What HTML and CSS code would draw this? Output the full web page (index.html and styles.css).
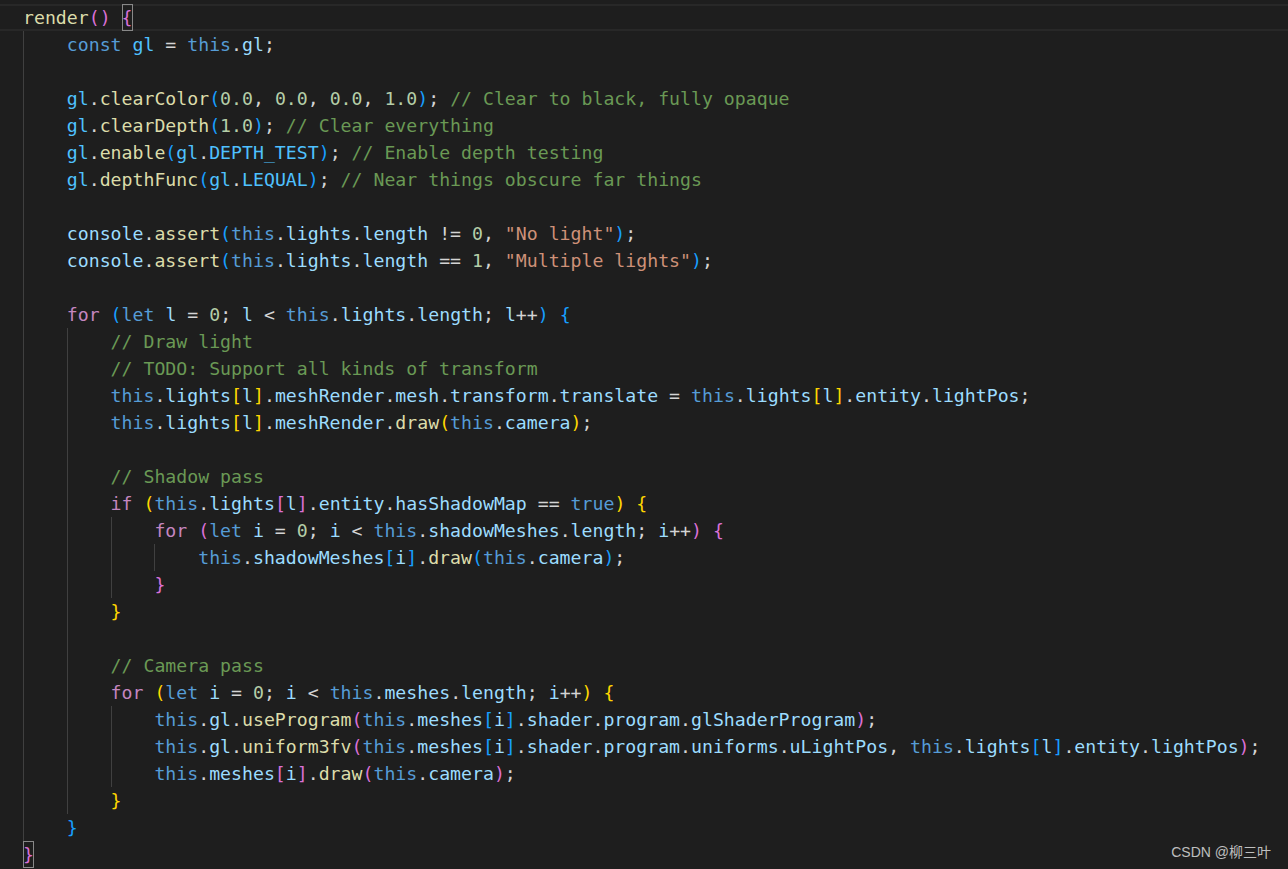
FILE: index.html
```html
<!doctype html>
<html lang="en">
	<head>
		<meta charset="UTF-8" />
		<meta name="viewport" content="width=device-width, initial-scale=1.0" />
		<title>render()</title>
		<link rel="stylesheet" href="styles.css">
	</head>
	<body>
		<main class="editor">
			<div class="ln cur"><span class="f">render</span><span class="b2">()</span> <span class="b2 match">{</span></div>
			<div class="ln"><span class="ind">    </span><span class="k">const</span> <span class="cn">gl</span> = <span class="k">this</span>.<span class="v">gl</span>;</div>
			<div class="ln"><span class="ind">    </span></div>
			<div class="ln"><span class="ind">    </span><span class="cn">gl</span>.<span class="f">clearColor</span><span class="b3">(</span><span class="n">0.0</span>, <span class="n">0.0</span>, <span class="n">0.0</span>, <span class="n">1.0</span><span class="b3">)</span>; <span class="cm">// Clear to black, fully opaque</span></div>
			<div class="ln"><span class="ind">    </span><span class="cn">gl</span>.<span class="f">clearDepth</span><span class="b3">(</span><span class="n">1.0</span><span class="b3">)</span>; <span class="cm">// Clear everything</span></div>
			<div class="ln"><span class="ind">    </span><span class="cn">gl</span>.<span class="f">enable</span><span class="b3">(</span><span class="cn">gl</span>.<span class="cn">DEPTH_TEST</span><span class="b3">)</span>; <span class="cm">// Enable depth testing</span></div>
			<div class="ln"><span class="ind">    </span><span class="cn">gl</span>.<span class="f">depthFunc</span><span class="b3">(</span><span class="cn">gl</span>.<span class="cn">LEQUAL</span><span class="b3">)</span>; <span class="cm">// Near things obscure far things</span></div>
			<div class="ln"><span class="ind">    </span></div>
			<div class="ln"><span class="ind">    </span><span class="v">console</span>.<span class="f">assert</span><span class="b3">(</span><span class="k">this</span>.<span class="v">lights</span>.<span class="v">length</span> != <span class="n">0</span>, <span class="s">"No light"</span><span class="b3">)</span>;</div>
			<div class="ln"><span class="ind">    </span><span class="v">console</span>.<span class="f">assert</span><span class="b3">(</span><span class="k">this</span>.<span class="v">lights</span>.<span class="v">length</span> == <span class="n">1</span>, <span class="s">"Multiple lights"</span><span class="b3">)</span>;</div>
			<div class="ln"><span class="ind">    </span></div>
			<div class="ln"><span class="ind">    </span><span class="c">for</span> <span class="b3">(</span><span class="k">let</span> <span class="v">l</span> = <span class="n">0</span>; <span class="v">l</span> &lt; <span class="k">this</span>.<span class="v">lights</span>.<span class="v">length</span>; <span class="v">l</span>++<span class="b3">)</span> <span class="b3">{</span></div>
			<div class="ln"><span class="ind">    </span><span class="ind">    </span><span class="cm">// Draw light</span></div>
			<div class="ln"><span class="ind">    </span><span class="ind">    </span><span class="cm">// TODO: Support all kinds of transform</span></div>
			<div class="ln"><span class="ind">    </span><span class="ind">    </span><span class="k">this</span>.<span class="v">lights</span><span class="b1">[</span><span class="v">l</span><span class="b1">]</span>.<span class="v">meshRender</span>.<span class="v">mesh</span>.<span class="v">transform</span>.<span class="v">translate</span> = <span class="k">this</span>.<span class="v">lights</span><span class="b1">[</span><span class="v">l</span><span class="b1">]</span>.<span class="v">entity</span>.<span class="v">lightPos</span>;</div>
			<div class="ln"><span class="ind">    </span><span class="ind">    </span><span class="k">this</span>.<span class="v">lights</span><span class="b1">[</span><span class="v">l</span><span class="b1">]</span>.<span class="v">meshRender</span>.<span class="f">draw</span><span class="b1">(</span><span class="k">this</span>.<span class="v">camera</span><span class="b1">)</span>;</div>
			<div class="ln"><span class="ind">    </span><span class="ind">    </span></div>
			<div class="ln"><span class="ind">    </span><span class="ind">    </span><span class="cm">// Shadow pass</span></div>
			<div class="ln"><span class="ind">    </span><span class="ind">    </span><span class="c">if</span> <span class="b1">(</span><span class="k">this</span>.<span class="v">lights</span><span class="b2">[</span><span class="v">l</span><span class="b2">]</span>.<span class="v">entity</span>.<span class="v">hasShadowMap</span> == <span class="k">true</span><span class="b1">)</span> <span class="b1">{</span></div>
			<div class="ln"><span class="ind">    </span><span class="ind">    </span><span class="ind">    </span><span class="c">for</span> <span class="b2">(</span><span class="k">let</span> <span class="v">i</span> = <span class="n">0</span>; <span class="v">i</span> &lt; <span class="k">this</span>.<span class="v">shadowMeshes</span>.<span class="v">length</span>; <span class="v">i</span>++<span class="b2">)</span> <span class="b2">{</span></div>
			<div class="ln"><span class="ind">    </span><span class="ind">    </span><span class="ind">    </span><span class="ind">    </span><span class="k">this</span>.<span class="v">shadowMeshes</span><span class="b3">[</span><span class="v">i</span><span class="b3">]</span>.<span class="f">draw</span><span class="b3">(</span><span class="k">this</span>.<span class="v">camera</span><span class="b3">)</span>;</div>
			<div class="ln"><span class="ind">    </span><span class="ind">    </span><span class="ind">    </span><span class="b2">}</span></div>
			<div class="ln"><span class="ind">    </span><span class="ind">    </span><span class="b1">}</span></div>
			<div class="ln"><span class="ind">    </span><span class="ind">    </span></div>
			<div class="ln"><span class="ind">    </span><span class="ind">    </span><span class="cm">// Camera pass</span></div>
			<div class="ln"><span class="ind">    </span><span class="ind">    </span><span class="c">for</span> <span class="b1">(</span><span class="k">let</span> <span class="v">i</span> = <span class="n">0</span>; <span class="v">i</span> &lt; <span class="k">this</span>.<span class="v">meshes</span>.<span class="v">length</span>; <span class="v">i</span>++<span class="b1">)</span> <span class="b1">{</span></div>
			<div class="ln"><span class="ind">    </span><span class="ind">    </span><span class="ind">    </span><span class="k">this</span>.<span class="v">gl</span>.<span class="f">useProgram</span><span class="b2">(</span><span class="k">this</span>.<span class="v">meshes</span><span class="b3">[</span><span class="v">i</span><span class="b3">]</span>.<span class="v">shader</span>.<span class="v">program</span>.<span class="v">glShaderProgram</span><span class="b2">)</span>;</div>
			<div class="ln"><span class="ind">    </span><span class="ind">    </span><span class="ind">    </span><span class="k">this</span>.<span class="v">gl</span>.<span class="f">uniform3fv</span><span class="b2">(</span><span class="k">this</span>.<span class="v">meshes</span><span class="b3">[</span><span class="v">i</span><span class="b3">]</span>.<span class="v">shader</span>.<span class="v">program</span>.<span class="v">uniforms</span>.<span class="v">uLightPos</span>, <span class="k">this</span>.<span class="v">lights</span><span class="b3">[</span><span class="v">l</span><span class="b3">]</span>.<span class="v">entity</span>.<span class="v">lightPos</span><span class="b2">)</span>;</div>
			<div class="ln"><span class="ind">    </span><span class="ind">    </span><span class="ind">    </span><span class="k">this</span>.<span class="v">meshes</span><span class="b2">[</span><span class="v">i</span><span class="b2">]</span>.<span class="f">draw</span><span class="b2">(</span><span class="k">this</span>.<span class="v">camera</span><span class="b2">)</span>;</div>
			<div class="ln"><span class="ind">    </span><span class="ind">    </span><span class="b1">}</span></div>
			<div class="ln"><span class="ind">    </span><span class="b3">}</span></div>
			<div class="ln"><span class="b2 match">}</span></div>
		</main>

		<!-- site watermark in the corner of the screenshot -->
		<div class="watermark">CSDN @柳三叶</div>
	</body>
</html>
```

FILE: styles.css
```css
html,
body {
	margin: 0;
	padding: 0;
	background-color: #1e1e1e;
}

body {
	height: 869px;
	overflow: hidden;
	position: relative;
}

.editor {
	padding-top: 4px;
	font-family: "DejaVu Sans Mono", monospace;
	font-size: 18.2px;
	line-height: 27px;
	color: #d4d4d4;
}

.ln {
	height: 27px;
	padding-left: 23px;
	white-space: pre;
}

/* current line: VS Code draws a border, not a fill */
.ln.cur {
	box-shadow: inset 0 2px #282828, inset 0 -2px #282828;
}

/* one indent level, the guide is its left edge */
.ind {
	display: inline-block;
	width: 4ch;
	height: 27px;
	vertical-align: top;
	box-shadow: inset 1px 0 #404040;
}

.match {
	display: inline-block;
	height: 27px;
	vertical-align: top;
	outline: 1px solid #888888;
	outline-offset: -1px;
}

/* tokens */
.k { color: #569cd6; }
.c { color: #c586c0; }
.f { color: #dcdcaa; }
.v { color: #9cdcfe; }
.cn { color: #4fc1ff; }
.n { color: #b5cea8; }
.s { color: #ce9178; }
.cm { color: #6a9955; }

/* bracket pair colours */
.b1 { color: #ffd700; }
.b2 { color: #da70d6; }
.b3 { color: #179fff; }

.watermark {
	position: absolute;
	right: 17px;
	bottom: 7px;
	font-family: "Liberation Sans", "Noto Sans CJK SC", sans-serif;
	font-size: 14px;
	line-height: 20px;
	color: rgba(255, 255, 255, 0.72);
}
```
